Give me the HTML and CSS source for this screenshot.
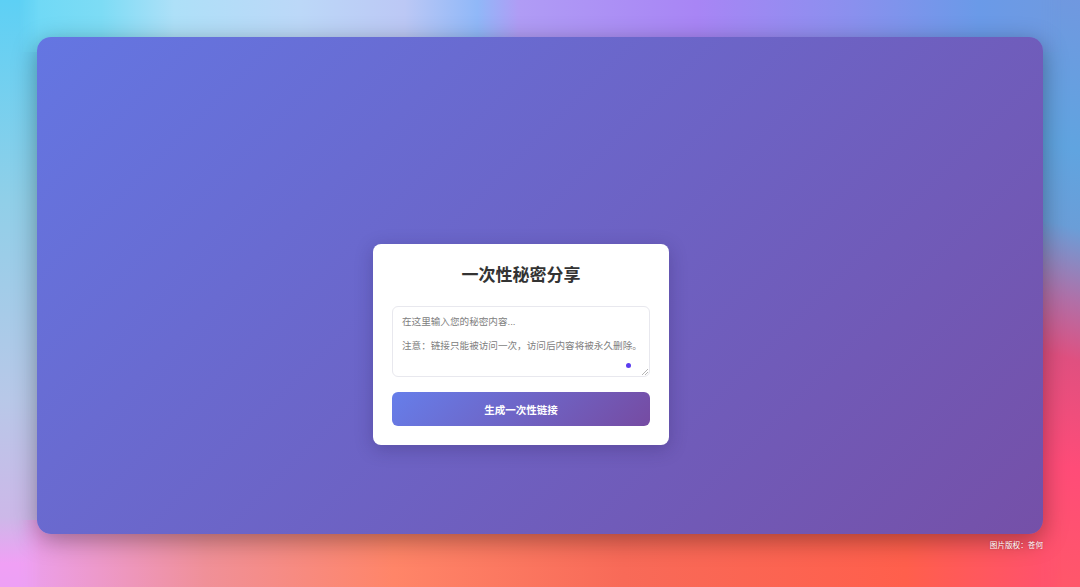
FILE: index.html
```html
<!DOCTYPE html>
<html lang="zh-CN">
<head>
    <meta charset="UTF-8">
    <meta name="viewport" content="width=device-width, initial-scale=1.0">
    <title>一次性秘密分享</title>
    <link rel="stylesheet" href="styles.css">
</head>
<body>

    <div class="stage">
        <div class="window">
            <div class="card">
                <h1 class="title">一次性秘密分享</h1>
                <div class="field">
                    <textarea class="secret" placeholder="在这里输入您的秘密内容...&#10;&#10;注意：链接只能被访问一次，访问后内容将被永久删除。"></textarea>
                    <span class="dot"></span>
                </div>
                <button class="button">生成一次性链接</button>
            </div>
        </div>
        <p class="credit">图片版权：苍何</p>
    </div>

</body>
</html>
```
FILE: styles.css
```css
* {
    box-sizing: border-box;
}
body {
    margin: 0;
    font-family: "Liberation Sans", "Noto Sans CJK SC", sans-serif;
}
.stage {
    position: relative;
    height: 587px;
    overflow: hidden;
    padding: 37px 37px 0;
    background-color: #a88cf0;
    background-repeat: no-repeat;
    background-size: 60px 100%, 60px 100%;
    background-position: left top, right top;
    background-image:
        linear-gradient(180deg, #5dd0f5 0%, #90cfe8 34%, #b8c8e8 68%, #ccb8e8 88%, #f0a0f5 96%, #eda0f5 100%),
        linear-gradient(195deg, #7098e0 0%, #60a4e0 25%, #6a9ed8 38%, #b070a8 50%, #e05080 60%, #ff4c78 78%, #ff5868 100%);
}
/* colour bands above and below the window, the sides come from .stage */
.stage::before,
.stage::after {
    content: "";
    position: absolute;
    left: 18px;
    right: 18px;
    -webkit-mask-image: linear-gradient(90deg, transparent 0, #000 22px, #000 calc(100% - 22px), transparent 100%);
    mask-image: linear-gradient(90deg, transparent 0, #000 22px, #000 calc(100% - 22px), transparent 100%);
}
.stage::before {
    top: 0;
    height: 52px;
    background: linear-gradient(90deg, #6cd8f6 0%, #7ddcf5 8%, #aee0f8 15%, #bcd8f8 27%, #bcc8f5 37%, #90b8f8 44%, #b09cf5 48%, #a885f5 65%, #8a90ee 80%, #6a9ae8 92%, #6f9ae0 100%);
}
.stage::after {
    bottom: 0;
    height: 67px;
    background: linear-gradient(90deg, #eba0f0 0%, #f09098 18%, #ff8568 36%, #f86a58 58%, #ff5f4c 85%, #ff5070 100%);
}
.window {
    position: relative;
    z-index: 1;
    height: 497px;
    display: flex;
    align-items: flex-end;
    justify-content: center;
    padding: 0 38px 89px 0;
    border-radius: 14px;
    background: linear-gradient(135deg, #6476e2 0%, #7550a8 100%);
    box-shadow: 0 6px 24px rgba(0, 0, 0, 0.35);
}
.card {
    width: 296px;
    height: 201px;
    padding: 19px;
    background: #fff;
    border-radius: 8px;
    box-shadow: 0 4px 18px rgba(30, 20, 70, 0.25);
}
.title {
    margin: 0 0 18px;
    height: 25px;
    line-height: 26px;
    font-size: 17px;
    font-weight: bold;
    text-align: center;
    color: #333;
}
.field {
    position: relative;
    height: 71px;
    margin-bottom: 15px;
}
.secret {
    display: block;
    width: 100%;
    height: 71px;
    padding: 9px 4px 9px 9px;
    border: 1px solid #e8e8ee;
    border-radius: 6px;
    outline: none;
    font-family: inherit;
    font-size: 9.6px;
    line-height: 12px;
    color: #333;
}
.secret::placeholder {
    color: #808080;
}
.secret::-webkit-resizer {
    background-image: linear-gradient(135deg, transparent 50%, #b5b5b5 50%, #b5b5b5 60%, transparent 60%, transparent 72%, #b5b5b5 72%, #b5b5b5 82%, transparent 82%);
    background-size: 7px 7px;
    background-position: right 1px bottom 1px;
    background-repeat: no-repeat;
}
.dot {
    position: absolute;
    top: 57px;
    right: 19px;
    width: 5px;
    height: 5px;
    border-radius: 50%;
    background: #5b3df0;
}
.button {
    display: block;
    width: 100%;
    height: 34px;
    border: none;
    border-radius: 6px;
    background: linear-gradient(135deg, #667eea 0%, #764ba2 100%);
    color: #fff;
    font-family: inherit;
    font-size: 10.5px;
    font-weight: bold;
    cursor: pointer;
}
.credit {
    position: relative;
    z-index: 1;
    margin: 6px 0 0;
    text-align: right;
    font-size: 7.6px;
    line-height: 11px;
    color: #fff;
    text-shadow: 0 0 2px rgba(0, 0, 0, 0.3);
}
```
